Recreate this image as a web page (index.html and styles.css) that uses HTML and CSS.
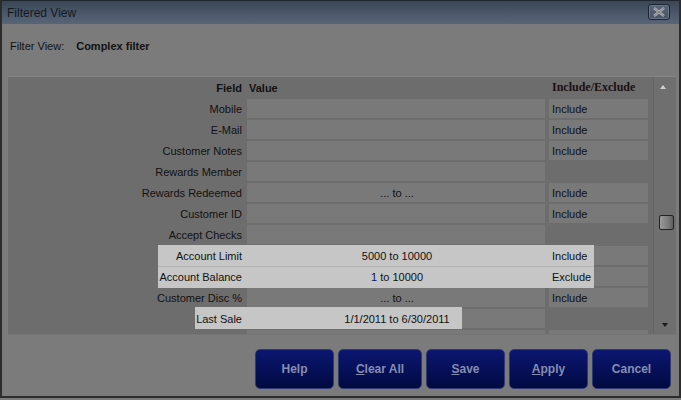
FILE: index.html
```html
<!DOCTYPE html>
<html>
<head>
  <meta charset="UTF-8">
  <title>Filtered View</title>
<link rel="stylesheet" href="styles.css">
</head>
<body>
  <div class="window">
    <div class="titlebar">
      <span class="title">Filtered View</span>
      <div class="close-btn">
        <svg width="14" height="10" viewBox="0 0 14 10">
          <path d="M2 1 L12 9 M12 1 L2 9" stroke="#b4b4b4" stroke-width="2.6" fill="none"/>
          <path d="M2 1 L12 9 M12 1 L2 9" stroke="#6c6c6c" stroke-width="0.8" fill="none"/>
        </svg>
      </div>
    </div>

    <div class="filter-line">
      <span class="filter-label">Filter View:</span>
      <span class="filter-name">Complex filter</span>
    </div>

    <div class="grid">
      <div class="table">
        <div class="row head">
          <div class="field"><span>Field</span></div>
          <div class="value"><span>Value</span></div>
          <div class="incl"><span>Include/Exclude</span></div>
        </div>
        <div class="row">
          <div class="field"><span>Mobile</span></div>
          <div class="value cell"></div>
          <div class="incl cell"><span>Include</span></div>
        </div>
        <div class="row">
          <div class="field"><span>E-Mail</span></div>
          <div class="value cell"></div>
          <div class="incl cell"><span>Include</span></div>
        </div>
        <div class="row">
          <div class="field"><span>Customer Notes</span></div>
          <div class="value cell"></div>
          <div class="incl cell"><span>Include</span></div>
        </div>
        <div class="row">
          <div class="field"><span>Rewards Member</span></div>
          <div class="value cell"></div>
          <div class="incl"></div>
        </div>
        <div class="row">
          <div class="field"><span>Rewards Redeemed</span></div>
          <div class="value cell center"><span>... to ...</span></div>
          <div class="incl cell"><span>Include</span></div>
        </div>
        <div class="row">
          <div class="field"><span>Customer ID</span></div>
          <div class="value cell"></div>
          <div class="incl cell"><span>Include</span></div>
        </div>
        <div class="row">
          <div class="field"><span>Accept Checks</span></div>
          <div class="value cell"></div>
          <div class="incl"></div>
        </div>
        <div class="row lit lit-wide">
          <div class="field"><span>Account Limit</span></div>
          <div class="value cell center"><span>5000 to 10000</span></div>
          <div class="incl cell"><span>Include</span></div>
        </div>
        <div class="row lit lit-wide">
          <div class="field"><span>Account Balance</span></div>
          <div class="value cell center"><span><b class="num">1</b> to 10000</span></div>
          <div class="incl cell"><span>Exclude</span></div>
        </div>
        <div class="row">
          <div class="field"><span>Customer Disc %</span></div>
          <div class="value cell center"><span>... to ...</span></div>
          <div class="incl cell"><span>Include</span></div>
        </div>
        <div class="row lit lit-short">
          <div class="field"><span>Last Sale</span></div>
          <div class="value cell center"><span>1/1/2011 to 6/30/2011</span></div>
          <div class="incl"></div>
        </div>
        <div class="row">
          <div class="field"></div>
          <div class="value cell"></div>
          <div class="incl cell"></div>
        </div>
      </div>
      <div class="scrollbar">
        <div class="arrow up"></div>
        <div class="track"><div class="thumb"></div></div>
        <div class="arrow down"></div>
      </div>
    </div>

    <div class="footer">
      <button class="btn">Help</button>
      <button class="btn wide"><u>C</u>lear All</button>
      <button class="btn"><u>S</u>ave</button>
      <button class="btn"><u>A</u>pply</button>
      <button class="btn">Cancel</button>
    </div>
  </div>
</body>
</html>
```

FILE: styles.css
```css
body, html {
  margin: 0;
  padding: 0;
  background: #7b7b7b;
  font-family: "Liberation Sans", Arial, sans-serif;
  font-size: 11px;
  color: #111;
}
.window {
  width: 677px;
  height: 396px;
  border: 2px solid #2c2c2c;
  border-top: 0;
  background: #7b7b7b;
  display: flex;
  flex-direction: column;
  overflow: hidden;
}
.titlebar {
  height: 23px;
  display: flex;
  align-items: center;
  justify-content: space-between;
  padding: 0 9px 0 5px;
  background: linear-gradient(#3a4656, #4d5a6c 60%, #586577);
  border-top: 1px solid #1e2630;
}
.title {
  color: #151a22;
  font-size: 12px;
}
.close-btn {
  width: 20px;
  height: 14px;
  border: 1px solid #1c2430;
  border-radius: 3px;
  box-shadow: inset 0 0 0 1px #6a7688;
  background: linear-gradient(#56637a, #485568);
  display: flex;
  align-items: center;
  justify-content: center;
  margin-top: -2px;
}
.filter-line {
  height: 52px;
  padding: 16px 0 0 8px;
  box-sizing: border-box;
  display: flex;
  gap: 12px;
  color: #121212;
}
.filter-name {
  font-weight: bold;
}
.grid {
  margin: 0 3px 0 6px;
  height: 259px;
  display: flex;
  background: #6d6d6d;
  border-top: 1px solid #858585;
  border-bottom: 1px solid #747474;
  box-sizing: border-box;
}
.table {
  flex: 1;
  overflow: hidden;
}
.row {
  height: 21px;
  display: flex;
  position: relative;
}
.row.head {
  font-weight: bold;
}
.row > div {
  height: 19px;
  margin-top: 1px;
  display: flex;
  align-items: center;
  box-sizing: border-box;
}
.row span {
  position: relative;
  z-index: 2;
  white-space: nowrap;
}
.field {
  width: 239px;
  justify-content: flex-end;
  padding-right: 5px;
}
.value {
  width: 298px;
  padding-left: 2px;
}
.value.center {
  justify-content: center;
}
.incl {
  width: 99px;
  margin-left: 4px;
  padding-left: 3px;
}
.head .incl {
  color: #1c1012;
  font-family: "Liberation Serif", serif;
  font-size: 12px;
}
.cell {
  background: #797979;
}
.lit::before {
  content: "";
  position: absolute;
  top: 0;
  height: 21px;
  background: #c6c6c6;
  z-index: 1;
}
.lit-wide::before {
  left: 150px;
  width: 436px;
}
.lit-short::before {
  left: 187px;
  width: 267px;
  top: -1px;
  height: 22px;
}
.lit-wide + .lit-wide::before {
  border-top: 1px solid #b4b4b4;
}
.num {
  font-weight: normal;
  color: #0c1458;
}
.scrollbar {
  width: 22px;
  display: flex;
  flex-direction: column;
  align-items: center;
  border-left: 1px solid #656565;
  background: #6f6f6f;
}
.arrow {
  height: 20px;
  width: 100%;
  display: flex;
  align-items: center;
  justify-content: center;
}
.arrow.up::after {
  content: "";
  border: 3px solid transparent;
  border-bottom: 4px solid #cfcfcf;
  margin: -4px 4px 0 0;
}
.arrow.down::after {
  content: "";
  border: 3px solid transparent;
  border-top: 4px solid #1a1a1a;
  margin: 4px 0 0 0;
}
.track {
  flex: 1;
  width: 100%;
  position: relative;
}
.thumb {
  position: absolute;
  top: 118px;
  left: 5px;
  width: 13px;
  height: 13px;
  border: 1px solid #222;
  border-radius: 2px;
  background: linear-gradient(90deg, #9a9a9a, #7c7c7c 60%, #5e5e5e);
}
.footer {
  flex: 1;
  display: flex;
  justify-content: flex-end;
  align-items: flex-start;
  gap: 4px;
  padding: 14px 8px 0 0;
}
.btn {
  width: 79px;
  height: 40px;
  border: 1px solid #2f3a70;
  border-radius: 5px;
  background: linear-gradient(#0b1670, #06105a 50%, #020a40);
  color: #858daf;
  font-family: "Liberation Sans", Arial, sans-serif;
  font-size: 12px;
  font-weight: bold;
  padding: 0;
}
.btn.wide {
  width: 84px;
}
```
